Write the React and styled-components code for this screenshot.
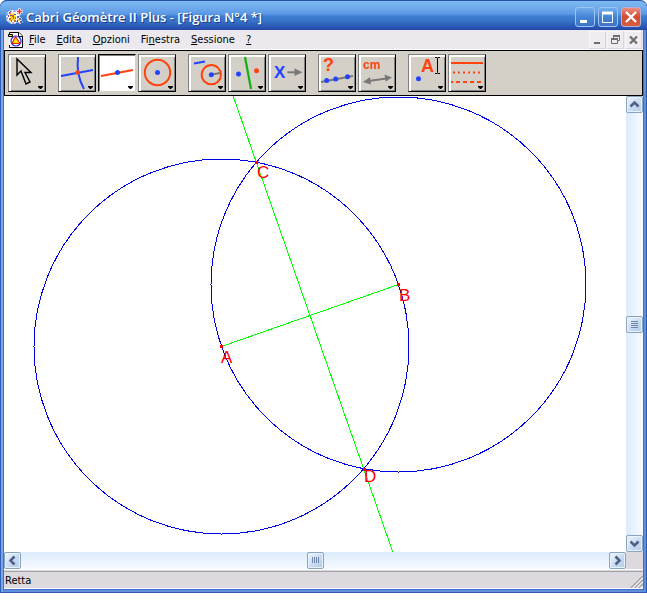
import React from "react";
import styled, { createGlobalStyle } from "styled-components";

const GlobalStyle = createGlobalStyle`
  * {
    box-sizing: border-box;
  }

  body {
    margin: 0;
    background: #ffffff;
    font-family: "DejaVu Sans Condensed", "Noto Sans", sans-serif;
    font-size: 11px;
    color: #000000;
  }

  button {
    font: inherit;
    color: inherit;
    padding: 0;
    border: 0;
    background: none;
  }
`;

const Window = styled.div`
  display: flex;
  flex-direction: column;
  height: calc(100vh - 7px);
  min-height: 300px;
  padding: 0 4px 4px;
  border-radius: 7px 7px 0 0;
  background: #3e71cb;
  box-shadow: inset 1px 0 #2f5fb8, inset -1px -1px #2a58b4, inset 3px 0 #7aa6e6,
    inset -3px -3px #5f90dc;
  overflow: hidden;
`;

const TitleBar = styled.header`
  display: flex;
  align-items: center;
  flex: none;
  height: 30px;
  margin: 0 -4px;
  padding: 2px 6px 0;
  border-top: 1px solid #2a50a8;
  border-radius: 7px 7px 0 0;
  background: linear-gradient(
    #7cbaf0 0%,
    #72aeec 20%,
    #5c98e4 45%,
    #3f7fd2 52%,
    #3672c8 70%,
    #2850b0 94%,
    #2646a0 100%
  );
`;

const Title = styled.h1`
  flex: 1;
  margin: 0 0 0 3px;
  font-family: "Open Sans", "Noto Sans", sans-serif;
  font-size: 13px;
  font-weight: 600;
  line-height: 20px;
  color: #ffffff;
  text-shadow: 1px 1px #1c3c8c;
  white-space: nowrap;
  overflow: hidden;
`;

const TitleButtons = styled.div`
  display: flex;
  gap: 3px;
`;

const TitleButton = styled.button`
  display: block;
  width: 20px;
  height: 20px;
  border: 1px solid ${(p) => (p.$close ? "#b8b0d4" : "#9cc4f4")};
  border-radius: 3px;
  background: ${(p) =>
    p.$close
      ? "linear-gradient(#e89080, #d84830 50%, #d86040)"
      : "linear-gradient(#74acec, #4484d4 50%, #3c74c8)"};

  svg {
    display: block;
  }
`;

const MenuBar = styled.nav`
  display: flex;
  align-items: center;
  flex: none;
  height: 20px;
  padding-left: 4px;
  background: #ebe9ed;
  border-bottom: 1px solid #ffffff;
`;

const MenuItems = styled.div`
  display: flex;
  flex: 1;
  gap: 11px;
  margin-left: 5px;
`;

const MenuItem = styled.button`
  line-height: 18px;

  u {
    text-underline-offset: 1px;
  }
`;

const ChildButton = styled.button`
  width: 17px;
  height: 18px;
  margin-right: 1px;
  background: #efedf1;
  border: 1px solid #f8f8fa;
  border-right-color: #d8d6dc;
  border-bottom-color: #d8d6dc;

  svg {
    display: block;
  }
`;

const ToolBar = styled.div`
  display: flex;
  flex: none;
  gap: 12px;
  padding: 3px;
  height: 46px;
  border: 1px solid #000000;
  background: #d4d0c8;
`;

const ToolGroup = styled.div`
  display: flex;
  gap: 2px;
`;

const ToolButton = styled.button`
  width: 38px;
  height: 38px;
  border: 1px solid;
  border-color: ${(p) =>
    p.$active ? "#000000 #d4d0c8 #d4d0c8 #000000" : "#808080 #000000 #000000 #808080"};
  background: ${(p) => (p.$active ? "#ffffff" : "#d4d0c8")};
  box-shadow: ${(p) =>
    p.$active
      ? "inset 1px 1px #808080"
      : "inset 2px 2px #ffffff, inset -1px -1px #808080"};

  svg {
    display: block;
    margin: -1px;
    font-family: "Liberation Sans", Arial, sans-serif;
    font-weight: 700;
  }
`;

const WorkArea = styled.main`
  display: grid;
  flex: 1;
  min-height: 0;
  grid-template-columns: minmax(0, 1fr) 17px;
  grid-template-rows: minmax(0, 1fr) 17px;
  background: #dcdadf;
`;

const Canvas = styled.svg`
  display: block;
  width: 100%;
  height: 100%;
  background: #ffffff;
  font-family: "Liberation Sans", Arial, sans-serif;
  font-size: 17px;
`;

const ScrollBar = styled.div`
  display: flex;
  flex-direction: ${(p) => (p.$vertical ? "column" : "row")};
  background: linear-gradient(
    ${(p) => (p.$vertical ? "to right" : "to bottom")},
    #dcebfc,
    #f8fbff
  );
`;

const ScrollTrack = styled.div`
  display: flex;
  flex: 1;
  align-items: center;
  justify-content: center;
`;

const ScrollButton = styled.button`
  flex: none;
  width: 17px;
  height: 17px;
  border: 1px solid #8aa4c0;
  border-radius: 2px;
  background: linear-gradient(135deg, #f0f6fe, #c4d8f0 60%, #b4cce8);
  box-shadow: inset 0 0 0 1px #e8f2fc;

  svg {
    display: block;
    margin: -1px;
  }
`;

const StatusBar = styled.footer`
  display: flex;
  align-items: center;
  justify-content: space-between;
  flex: none;
  height: 20px;
  padding: 2px 0 0 1px;
  border-top: 1px solid #ffffff;
  border-bottom: 1px solid #ffffff;
  background: #dcdadf;
  box-shadow: inset 0 1px #dcdadf, inset 0 2px #a4a2a8;
`;

const Grip = styled.svg`
  display: block;
  align-self: flex-end;
`;

const RED = "#ff420e";
const BLUE = "#2244ff";
const GRAY = "#787878";

const AppIcon = () => (
  <svg width="17" height="17" viewBox="0 0 17 17" aria-hidden="true">
    <circle cx="7" cy="9" r="6" fill="#ffffff" stroke="#ffffff" strokeWidth="2" />
    <circle cx="7" cy="9" r="6" fill="none" stroke="#2840c8" strokeDasharray="2 2" />
    <path d="M3 5l3 1 2-2 1 4 4 2-4 1 1 3-4-2-3 2 1-4z" fill="#ffd820" />
    <path d="M4 4v2M3 11h2M6 8h2M8 13h2M10 9v2" stroke="#e03020" strokeWidth="1.500" />
    <path d="M5 7v1M9 6v1M5 13h1M7 10h1M2 8h1" stroke="#2020c0" strokeWidth="1.500" />
    <path d="M10 8l2-1 1 2 3 1-1 2 2 2-3 2-2-2-2-1z" fill="#ffffff" />
    <path d="M11 9h2M13 11h2M11 13h1M14 14h2" stroke="#303070" strokeWidth="1.500" />
    <path d="M12 12h2M11 11h1" stroke="#e8b820" strokeWidth="1.500" />
    <path d="M10.500 3.500h6M13.500.5v6" stroke="#ffffff" strokeWidth="3" />
    <path d="M11 3.500h5M13.500 1v5" stroke="#f03030" strokeWidth="1.500" />
  </svg>
);

const DocumentIcon = () => (
  <svg width="16" height="16" viewBox="0 0 16 16" aria-hidden="true">
    <path d="M1 .5h10l4 4v11H1z" fill="#ffffff" />
    <path d="M1.500 5V.5H11l3.500 3.500v11.500H1.500V13" fill="none" stroke="#000000" />
    <path d="M10.500.5v4h4" fill="#ffffff" stroke="#000000" />
    <circle cx="8" cy="9" r="5" fill="none" stroke="#2030e0" strokeWidth="1.200" />
    <path d="M7.500 4.500l4.500 7h-8z" fill="#ffe800" stroke="#f02020" strokeWidth="1.200" />
    <path d="M.5 2.500h4v2h-4z" fill="#ffe800" stroke="#000000" />
  </svg>
);

const icons = {
  pointer: (
    <path
      d="M9 5v16l4-4 5 13 4-2-5-9.500h6z"
      fill="none"
      stroke="#000000"
      strokeWidth="1.400"
    />
  ),
  points: (
    <g fill="none" stroke={BLUE} strokeWidth="2">
      <path d="M3 22l32-6M20 3q-2 18 6 32" />
      <circle cx="19.500" cy="18.500" r="2.200" fill={RED} stroke="none" />
    </g>
  ),
  lines: (
    <g>
      <path d="M3 22l32-6" stroke={RED} strokeWidth="2.200" />
      <circle cx="19.500" cy="18.500" r="2.500" fill={BLUE} />
    </g>
  ),
  curves: (
    <g>
      <circle cx="19.500" cy="18.500" r="12.700" fill="none" stroke={RED} strokeWidth="2" />
      <circle cx="19.500" cy="18.500" r="2.500" fill={BLUE} />
    </g>
  ),
  constructions: (
    <g fill="none" strokeWidth="2">
      <path d="M6 9.500l11-2" stroke={BLUE} />
      <circle cx="23.300" cy="20.700" r="9.600" stroke={RED} />
      <path d="M24 20.500l8-1.500" stroke={GRAY} />
      <circle cx="23.300" cy="20.700" r="2.500" fill={BLUE} />
    </g>
  ),
  transformations: (
    <g>
      <path d="M17 3l6 32" stroke="#10b010" strokeWidth="2.200" />
      <circle cx="10.500" cy="20" r="2.500" fill={BLUE} />
      <circle cx="28.500" cy="16.700" r="2.500" fill={RED} />
    </g>
  ),
  macro: (
    <g>
      <text x="6" y="24" fontSize="17" fill={BLUE}>
        X
      </text>
      <path d="M19.500 18.300H28" stroke={GRAY} strokeWidth="2" />
      <path d="M26.500 14.500l8 3.800-8 3.800z" fill={GRAY} />
    </g>
  ),
  check: (
    <g>
      <text x="5" y="17" fontSize="18" fill={RED}>
        ?
      </text>
      <path d="M3 28l32-6" stroke={GRAY} strokeWidth="2" />
      <g fill={BLUE}>
        <circle cx="8.700" cy="26.500" r="2.500" />
        <circle cx="17.700" cy="25" r="2.500" />
        <circle cx="29.500" cy="22.800" r="2.500" />
      </g>
    </g>
  ),
  measure: (
    <g>
      <text x="5" y="15" fontSize="12" fill={RED}>
        cm
      </text>
      <path d="M9 27.200l21-3" stroke={GRAY} strokeWidth="2" />
      <path d="M5 28l7-5 1 7.500zM34 23.500l-7.500-3 1.200 7z" fill={GRAY} />
    </g>
  ),
  text: (
    <g>
      <text x="13" y="18" fontSize="18" fill={RED}>
        A
      </text>
      <path
        d="M27 3.500h2l.5 1 .5-1h2M29.500 4.500v14M27 19.500h2l.5-1 .5 1h2"
        fill="none"
        stroke="#000000"
      />
      <circle cx="10.500" cy="24.700" r="2.500" fill={BLUE} />
    </g>
  ),
  attributes: (
    <g stroke={RED} strokeWidth="2">
      <path d="M3 9h32" />
      <path d="M5 18.500h30" strokeDasharray="2 3" />
      <path d="M3 28h32" strokeDasharray="4 3" strokeDashoffset="2" />
    </g>
  ),
};

const toolGroups = [
  [["pointer", "Puntatore"]],
  [
    ["points", "Punti"],
    ["lines", "Rette"],
    ["curves", "Curve"],
  ],
  [
    ["constructions", "Costruzioni"],
    ["transformations", "Trasformazioni"],
    ["macro", "Macro"],
  ],
  [
    ["check", "Proprietà"],
    ["measure", "Misura"],
  ],
  [
    ["text", "Testo"],
    ["attributes", "Attributi"],
  ],
];

const menus = [
  ["", "F", "ile"],
  ["", "E", "dita"],
  ["", "O", "pzioni"],
  ["Fi", "n", "estra"],
  ["", "S", "essione"],
  ["", "?", ""],
];

const points = [
  { name: "A", x: 217, y: 250, labelX: 217, labelY: 267 },
  { name: "B", x: 394, y: 188, labelX: 395, labelY: 205 },
  { name: "C", x: 252, y: 66, labelX: 253, labelY: 82 },
  { name: "D", x: 360, y: 373, labelX: 360, labelY: 386 },
];

const arrows = {
  up: "M4.500 10.500l4-4 4 4",
  down: "M4.500 6.500l4 4 4-4",
  left: "M10.500 4.500l-4 4 4 4",
  right: "M6.500 4.500l4 4-4 4",
};

const Arrow = ({ direction, label }) => (
  <ScrollButton aria-label={label}>
    <svg width="17" height="17">
      <path d={arrows[direction]} fill="none" stroke="#4d6185" strokeWidth="2.500" />
    </svg>
  </ScrollButton>
);

const Thumb = ({ vertical }) => (
  <ScrollButton aria-label="Scorri">
    <svg width="17" height="17">
      <path
        d={vertical ? "M5 5.500h7M5 7.500h7M5 9.500h7M5 11.500h7" : "M5.500 5v6M7.500 5v6M9.500 5v6M11.500 5v6"}
        stroke="#7088a8"
      />
    </svg>
  </ScrollButton>
);

const Figure = () => (
  <Canvas role="img" aria-label="Figura N°4">
    <g fill="none" shapeRendering="crispEdges">
      <circle cx="217.500" cy="250.500" r="187.500" stroke="#0000e8" />
      <circle cx="394.500" cy="188.500" r="187.500" stroke="#0000e8" />
      <path d="M217.500 250.500l177-62M229.100 0l159.700 456" stroke="#00ff00" />
    </g>
    {points.map((point) => (
      <g key={point.name} fill="#ff0000">
        <rect x={point.x - 1} y={point.y - 1} width="3" height="3" />
        <text x={point.labelX} y={point.labelY}>
          {point.name}
        </text>
      </g>
    ))}
  </Canvas>
);

const App = () => {
  return (
    <>
      <GlobalStyle />
      <Window>
        <TitleBar>
          <AppIcon />
          <Title>Cabri Géomètre II Plus - [Figura N°4 *]</Title>
          <TitleButtons>
            <TitleButton aria-label="Riduci a icona">
              <svg width="18" height="18">
                <path d="M4 13.500h7" stroke="#ffffff" strokeWidth="3" />
              </svg>
            </TitleButton>
            <TitleButton aria-label="Ingrandisci">
              <svg width="18" height="18">
                <path d="M3.500 4v10.500h10V4" fill="none" stroke="#ffffff" />
                <path d="M3 5h11" stroke="#ffffff" strokeWidth="3" />
              </svg>
            </TitleButton>
            <TitleButton $close aria-label="Chiudi">
              <svg width="18" height="18">
                <path d="M4 4l10 10M14 4L4 14" stroke="#ffffff" strokeWidth="2.400" />
              </svg>
            </TitleButton>
          </TitleButtons>
        </TitleBar>
        <MenuBar>
          <DocumentIcon />
          <MenuItems>
            {menus.map(([before, key, after]) => (
              <MenuItem key={key}>
                {before}
                <u>{key}</u>
                {after}
              </MenuItem>
            ))}
          </MenuItems>
          <ChildButton aria-label="Riduci figura">
            <svg width="15" height="16">
              <path d="M4 11h6" stroke="#706e68" strokeWidth="2" />
            </svg>
          </ChildButton>
          <ChildButton aria-label="Ripristina figura">
            <svg width="15" height="16" fill="none" stroke="#706e68">
              <path d="M3.500 7v4.500h6V7M3 7h7M5.500 6V4M11.500 4v4.500H10M5 4h7" />
              <path d="M3 7h7M5 4h7" strokeWidth="2" />
            </svg>
          </ChildButton>
          <ChildButton aria-label="Chiudi figura">
            <svg width="15" height="16">
              <path d="M4 4.500l7 7M11 4.500l-7 7" stroke="#706e68" strokeWidth="2.200" />
            </svg>
          </ChildButton>
        </MenuBar>
        <ToolBar role="toolbar">
          {toolGroups.map((group) => (
            <ToolGroup key={group[0][0]}>
              {group.map(([name, label]) => (
                <ToolButton key={name} $active={name === "lines"} aria-label={label}>
                  <svg width="38" height="38">
                    {icons[name]}
                    <path d="M30 32h5v1l-2 2h-1l-2-2z" fill="#000000" />
                  </svg>
                </ToolButton>
              ))}
            </ToolGroup>
          ))}
        </ToolBar>
        <WorkArea>
          <Figure />
          <ScrollBar $vertical>
            <Arrow direction="up" label="Su" />
            <ScrollTrack>
              <Thumb vertical />
            </ScrollTrack>
            <Arrow direction="down" label="Giù" />
          </ScrollBar>
          <ScrollBar>
            <Arrow direction="left" label="Sinistra" />
            <ScrollTrack>
              <Thumb />
            </ScrollTrack>
            <Arrow direction="right" label="Destra" />
          </ScrollBar>
        </WorkArea>
        <StatusBar>
          <span>Retta</span>
          <Grip width="13" height="13" aria-hidden="true">
            <path d="M1 13L13 1M5 13l8-8M9 13l4-4" stroke="#a09ea4" strokeWidth="1.500" />
            <path d="M2.500 13L13 2.500M6.500 13L13 6.500M10.500 13l2.500-2.500" stroke="#ffffff" />
          </Grip>
        </StatusBar>
      </Window>
    </>
  );
};

export default App;
